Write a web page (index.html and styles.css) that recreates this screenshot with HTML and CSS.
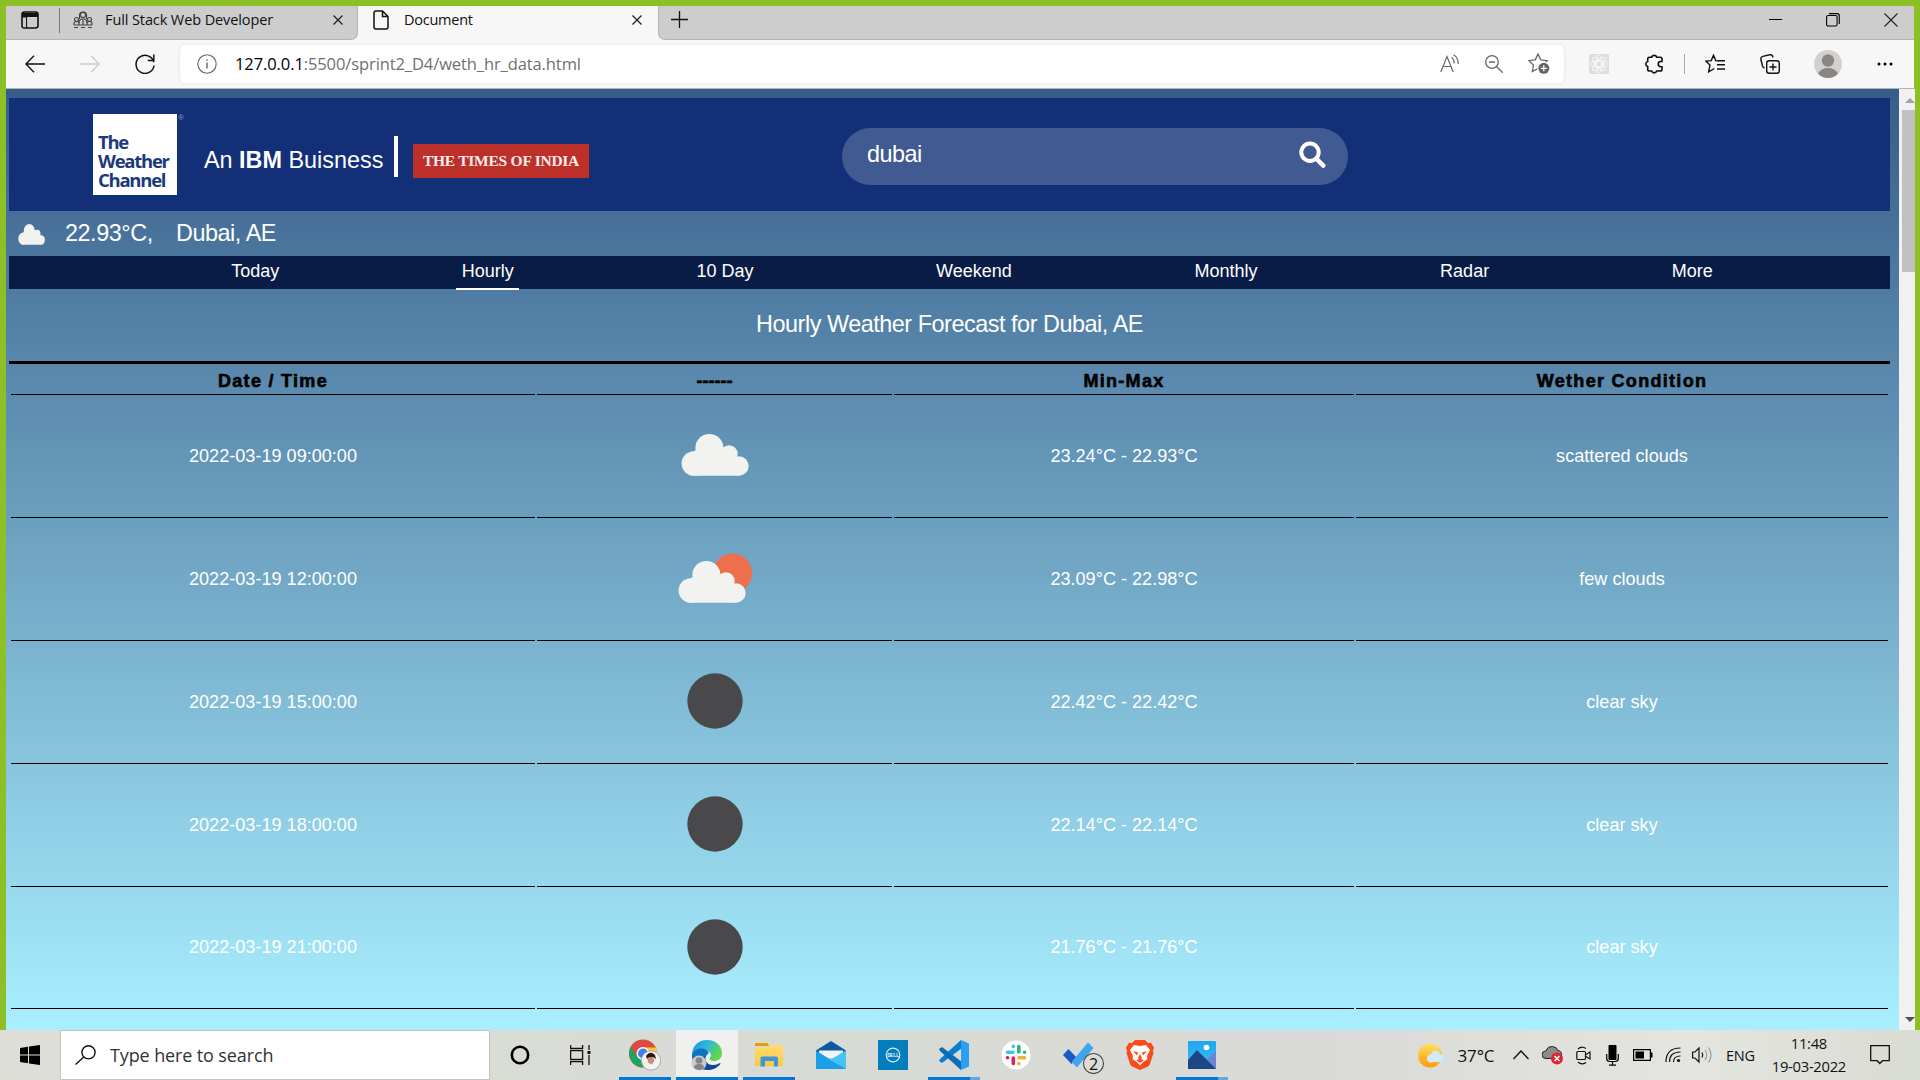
FILE: index.html
```html
<!DOCTYPE html>
<html lang="en">
<head>
<meta charset="utf-8">
<title>Document</title>
<link rel="stylesheet" href="styles.css">
</head>
<body>
<svg width="0" height="0" class="defs">
  <defs>
    <g id="cloud">
      <circle cx="28.9" cy="57.5" r="12.3"/><circle cx="44.4" cy="42" r="14"/><circle cx="64" cy="48" r="8.7"/><circle cx="74" cy="60" r="9.7"/>
      <path d="M29 45l16-8 20 6 9 10v16.7H29z"/>
    </g>
    <linearGradient id="edgeTop" x1="0" y1="0" x2="1" y2=".4"><stop offset="0" stop-color="#1b8fdc"/><stop offset=".5" stop-color="#2cb6dd"/><stop offset="1" stop-color="#62d84c"/></linearGradient>
    <linearGradient id="sky" x1="0" y1="0" x2="0" y2="1"><stop offset="0" stop-color="#1fa6ee"/><stop offset="1" stop-color="#3cc1f5"/></linearGradient>
    <linearGradient id="sunny" x1="0" y1="0" x2="0" y2="1"><stop offset="0" stop-color="#ffdf60"/><stop offset="1" stop-color="#ff9a0c"/></linearGradient>
    <linearGradient id="folder" x1="0" y1="0" x2="0" y2="1"><stop offset="0" stop-color="#ffdc72"/><stop offset="1" stop-color="#fbc83c"/></linearGradient>
  </defs>
</svg>
<div class="window">
  <div class="tabs">
    <div class="tab-menu">
      <svg width="18" height="18" viewBox="0 0 18 18"><rect x="1" y="1" width="16" height="16" rx="2.5" fill="none" stroke="#111" stroke-width="1.6"/><path d="M1 2h16v4H1zM1 5h4.5v12" fill="#111"/><rect x="2" y="6.5" width="3" height="9.6" fill="#cdcdcd"/><path d="M5.6 6v11" stroke="#111"/></svg>
    </div>
    <div class="tab">
      <svg class="favicon" width="20" height="18" viewBox="0 0 20 18" fill="none" stroke="#444" stroke-width="1.2"><circle cx="10" cy="4" r="2.7"/><path d="M6.5 8V4.5Q6.5 1 10 1t3.5 3.500V8M6 12q0-4 4-4t4 4"/><circle cx="3.500" cy="8.500" r="2"/><circle cx="16.500" cy="8.500" r="2"/><path d="M1 14v-1.500q0-2 2.500-2t2.500 2V14M14 14v-1.500q0-2 2.500-2t2.500 2V14M1 16.500h4M8 16.500h4M15 16.500h4M10 9v5M1 14h18"/></svg>
      <span class="tab-title t1">Full Stack Web Developer</span>
      <svg class="close" width="10" height="10" viewBox="0 0 10 10"><path d="M.5.5l9 9M9.500.5l-9 9" stroke="#222" stroke-width="1.300"/></svg>
    </div>
    <div class="tab active">
      <svg class="favicon" width="16" height="20" viewBox="0 0 16 20" fill="none" stroke="#111" stroke-width="1.500"><path d="M9.500 1H3Q1 1 1 3v14q0 2 2 2h10q2 0 2-2V6.500zM9.500 1v5.500H15"/></svg>
      <span class="tab-title t2">Document</span>
      <svg class="close" width="10" height="10" viewBox="0 0 10 10"><path d="M.5.5l9 9M9.500.5l-9 9" stroke="#222" stroke-width="1.300"/></svg>
    </div>
    <div class="rest">
      <svg width="17" height="17" viewBox="0 0 17 17"><path d="M8.500 0v17M0 8.500h17" stroke="#111" stroke-width="1.300"/></svg>
      <div class="controls">
        <svg width="13" height="14" viewBox="0 0 13 14"><path d="M0 6.500h13" stroke="#000"/></svg>
        <svg width="14" height="14" viewBox="0 0 14 14" fill="none" stroke="#000" stroke-width="1.100"><rect x=".6" y="2.500" width="10.500" height="10.500" rx="1.500"/><path d="M3 .6h8q2.300 0 2.300 2.300V11"/></svg>
        <svg width="14" height="14" viewBox="0 0 14 14"><path d="M.5.5l13 13M13.500.5l-13 13" stroke="#222" stroke-width="1.100"/></svg>
      </div>
    </div>
  </div>
  <div class="toolbar">
    <svg width="20" height="18" viewBox="0 0 20 18" fill="none" stroke="#111" stroke-width="1.400"><path d="M20 9H1M9 .7L.9 9l8.100 8.300"/></svg>
    <svg width="20" height="18" viewBox="0 0 20 18" fill="none" stroke="#ccc" stroke-width="1.400"><path d="M0 9h19M11 .7L19.100 9 11 17.300"/></svg>
    <svg width="20" height="20" viewBox="0 0 20 20" fill="none" stroke="#111" stroke-width="1.500"><path d="M18.800 8.200A9 9 0 1 0 19 11.500M18.800.500v6h-6" /></svg>
    <div class="address">
      <svg width="20" height="20" viewBox="0 0 20 20" fill="none" stroke="#666" stroke-width="1.100"><circle cx="10" cy="10" r="9.200"/><path d="M10 8.500v6M10 5.200v1.600" stroke-width="1.400"/></svg>
      <span class="url"><b>127.0.0.1</b>:5500/sprint2_D4/weth_hr_data.html</span>
      <div class="address-icons">
        <svg width="20" height="19" viewBox="0 0 20 19" fill="none" stroke="#666" stroke-width="1.200"><path d="M.8 18L7 2.500 13.200 18M3 12.500h8M11.500 3.500q3 2 2.700 6M13.500.7q5 2.800 4.700 9.300"/></svg>
        <svg width="18" height="18" viewBox="0 0 18 18" fill="none" stroke="#666" stroke-width="1.300"><circle cx="7" cy="7" r="6.300"/><path d="M4 7h6M11.700 11.700l6 6"/></svg>
        <svg width="22" height="21" viewBox="0 0 22 21"><path d="M10 1l2.800 5.900 6.400.8-4.700 4.400 1.200 6.400L10 15.400l-5.700 3.100 1.200-6.400L.8 7.700l6.400-.8z" fill="none" stroke="#666" stroke-width="1.300"/><circle cx="15.800" cy="15.300" r="6.500" fill="#fff"/><circle cx="15.800" cy="15.300" r="5.500" fill="#666"/><path d="M15.800 12.300v6M12.800 15.300h6" stroke="#fff" stroke-width="1.300"/></svg>
      </div>
    </div>
    <svg width="20" height="20" viewBox="0 0 20 20"><rect width="20" height="20" rx="1" fill="#dedede"/><g fill="none" stroke="#f6f6f6"><circle cx="10" cy="10" r="2.500"/><ellipse cx="10" cy="10" rx="8.500" ry="3.500"/><ellipse cx="10" cy="10" rx="8.500" ry="3.500" transform="rotate(45 10 10)"/><ellipse cx="10" cy="10" rx="8.500" ry="3.500" transform="rotate(90 10 10)"/><ellipse cx="10" cy="10" rx="8.500" ry="3.500" transform="rotate(135 10 10)"/></g></svg>
    <svg width="20" height="20" viewBox="0 0 20 20" fill="none" stroke="#111" stroke-width="1.600"><path d="M5.500 3.300h2.200a2.600 2.600 0 0 1 5 0h3.500q1.800 0 1.800 1.800v2.400h-1.200a2.600 2.600 0 0 0 0 5.200H18v2.500q0 1.800-1.800 1.800h-3.500a2.600 2.600 0 0 1-5 0H5.500q-1.800 0-1.800-1.800v-2.600a2.600 2.600 0 0 1 0-5V5.100q0-1.800 1.800-1.800z"/></svg>
    <i class="divider"></i>
    <svg width="20" height="20" viewBox="0 0 20 20" fill="none" stroke="#111" stroke-width="1.400"><path d="M14 7l-3.200-.4L8.500 1.200 6.200 6.600.8 7.100 4.900 11l-1.200 6.800 5.600-3.300M13 6.800h7M12 10.800h8M12 15h8"/></svg>
    <svg width="20" height="20" viewBox="0 0 20 20" fill="none" stroke="#111" stroke-width="1.400"><rect x="6.700" y="6.700" width="12.600" height="12.600" rx="2.500"/><path d="M13 9.500v7M9.500 13h7M4.500 14Q3 13.500 2.500 12L.9 5.500Q.5 3 2.800 2.400l7-1.600q2.500-.3 3 1.700l.3 1"/></svg>
    <svg width="28" height="28" viewBox="0 0 28 28"><circle cx="14" cy="14" r="14" fill="#d3d1ce"/><circle cx="14" cy="10.500" r="6.200" fill="#8b8683"/><path d="M4 23.500Q7 18 14 18t10 5.500Q20 28 14 28T4 23.500z" fill="#8b8683"/></svg>
    <svg class="dots" width="16" height="4" viewBox="0 0 16 4"><circle cx="2" cy="2" r="1.500"/><circle cx="8" cy="2" r="1.500"/><circle cx="14" cy="2" r="1.500"/></svg>
  </div>
  <div class="viewport">
    <main class="page">
      <header class="site-header">
        <div class="twc">The<br>Weather<br>Channel</div><span class="reg">®</span>
        <span class="ibm">An <b>IBM</b> Buisness</span>
        <i class="bar"></i>
        <span class="toi">THE TIMES OF INDIA</span>
        <div class="search"><span>dubai</span>
          <svg width="27" height="27" viewBox="0 0 27 27" fill="none" stroke="#fff"><circle cx="11" cy="11.200" r="8.700" stroke-width="4"/><path d="M17.500 17.800l6.800 6.800" stroke-width="4.500" stroke-linecap="round"/></svg>
        </div>
      </header>
      <div class="current">
        <svg width="27" height="21" viewBox="16 28 68 42" preserveAspectRatio="none" fill="#f2f2f0"><use href="#cloud"/></svg>
        <span class="temp">22.93°C,</span><span class="city">Dubai, AE</span>
      </div>
      <nav class="nav"><span>Today</span><span class="on">Hourly</span><span>10 Day</span><span>Weekend</span><span>Monthly</span><span>Radar</span><span>More</span></nav>
      <h1>Hourly Weather Forecast for Dubai, AE</h1>
      <table>
        <colgroup><col class="c1"><col class="c2"><col class="c3"><col class="c4"></colgroup>
        <thead><tr><th>Date / Time</th><th class="dash">------</th><th>Min-Max</th><th>Wether Condition</th></tr></thead>
        <tbody>
          <tr><td>2022-03-19 09:00:00</td><td><svg width="100" height="100" fill="#f2f2f0"><use href="#cloud"/></svg></td><td>23.24°C - 22.93°C</td><td>scattered clouds</td></tr>
          <tr><td>2022-03-19 12:00:00</td><td><svg width="100" height="100" fill="#f2f2f0"><circle cx="67.500" cy="44.300" r="19.700" fill="#ee6f4d"/><use href="#cloud" x="-3" y="4"/></svg></td><td>23.09°C - 22.98°C</td><td>few clouds</td></tr>
          <tr><td>2022-03-19 15:00:00</td><td><svg width="100" height="100"><circle cx="50" cy="49" r="27.700" fill="#49494b"/></svg></td><td>22.42°C - 22.42°C</td><td>clear sky</td></tr>
          <tr><td>2022-03-19 18:00:00</td><td><svg width="100" height="100"><circle cx="50" cy="49" r="27.700" fill="#49494b"/></svg></td><td>22.14°C - 22.14°C</td><td>clear sky</td></tr>
          <tr class="last"><td>2022-03-19 21:00:00</td><td><svg width="100" height="100"><circle cx="50" cy="49" r="27.700" fill="#49494b"/></svg></td><td>21.76°C - 21.76°C</td><td>clear sky</td></tr>
        </tbody>
      </table>
    </main>
    <div class="scroll">
      <svg width="10" height="5" viewBox="0 0 10 5"><path d="M0 5l5-5 5 5z" fill="#a3a3a3"/></svg>
      <i class="thumb"></i>
      <svg class="down" width="10" height="5" viewBox="0 0 10 5"><path d="M0 0l5 5 5-5z" fill="#505050"/></svg>
    </div>
  </div>
</div>
<div class="taskbar">
  <div class="slot start"><svg width="20" height="20" viewBox="0 0 20 20"><path d="M0 3l8-1.200v7.700H0zM9 1.600L20 0v9.500H9zM0 10.500h8v7.700L0 17zM9 10.500h11V20L9 18.400z"/></svg></div>
  <div class="find"><svg width="21" height="20" viewBox="0 0 21 20" fill="none" stroke="#111" stroke-width="1.400"><circle cx="13.500" cy="7.300" r="6.600"/><path d="M8.800 12L.6 19.400"/></svg><span>Type here to search</span></div>
  <div class="slot"><svg width="20" height="20" viewBox="0 0 20 20"><circle cx="10" cy="10" r="8.200" fill="none" stroke="#000" stroke-width="2.600"/></svg></div>
  <div class="slot"><svg width="21" height="20" viewBox="0 0 21 20" fill="none" stroke="#111" stroke-width="1.300"><path d="M.6 0v3.500h12V0M.6 20v-3.500h12V20M.6 5.700h12v8.600H.6zM19 0v5M19 10v10"/><path d="M17.500 6h3v3h-3z" fill="#111" stroke="none"/></svg></div>
  <div class="apps">
    <div class="app run"><svg width="32" height="32" viewBox="0 0 32 32"><circle cx="14" cy="14.500" r="14" fill="#db4b3f"/><path d="M2 7.500A14 14 0 0 0 14 28.500l6-10.500-12 0z" fill="#1da462"/><path d="M28 14.500A14 14 0 0 1 14 28.500L20 18 15 8.500h11.800q1.200 3 1.200 6z" fill="#fdc93c"/><circle cx="14" cy="14.500" r="6.500" fill="#fff"/><circle cx="14" cy="14.500" r="5" fill="#3f7fee"/><circle cx="22" cy="21.500" r="9.700" fill="#f4f1ee" stroke="#999" stroke-width=".8"/><path d="M17 17q4-6 9-1l1 4-3-2-6 2z" fill="#241a19"/><path d="M18.500 18.500l6-.5 1 4-3 3.500-3.500-2z" fill="#c98d78"/></svg></div>
    <div class="app run current-app"><svg width="32" height="32" viewBox="0 0 32 32"><path d="M1 15C2 5 9 1 16 1c9 0 15 6 15 13 0 6-4 8-8 8-4 0-5-2-3.500-4 1.500-3-1-6-5-6-6-1-10 0-13.500 3z" fill="url(#edgeTop)"/><path d="M1 15c2-4 6-6 10-5.500 4 .5 7 3 6.500 5-4 2-4 8 0 11 2 2 6 2 9.500 0-3 4-7 5.500-11 5.500C8 31 0 25 1 15z" fill="#1172c4"/><path d="M14.500 16.500c-2 5 2 10 8 9.500 3 0 5-1.500 6.500-2 1 0 .5 1-1 2.500-3 3-7 4.500-12 4.500-7-2-7-10-1.500-14.500z" fill="#0d4a94"/><circle cx="8" cy="24" r="7.500" fill="#c9c9c9"/><circle cx="8" cy="21.500" r="3.300" fill="#858585"/><path d="M3 29q0-4 5-4t5 4q-4 4-10 0z" fill="#858585"/></svg></div>
    <div class="app run"><svg width="28" height="26" viewBox="0 0 28 26"><path d="M0 2q0-1 1-1h11q1 0 1 1l1 2H0z" fill="#e2a000"/><path d="M0 6l14-1V3h14v20q0 1-1 1H1q-1 0-1-1z" fill="url(#folder)"/><path d="M5.500 24.500V16q0-1.500 1.500-1.500h14q2 0 2 1.500v8.500h-4V19h-9v5.500z" fill="#4094de"/></svg></div>
    <div class="app"><svg width="30" height="29" viewBox="0 0 30 29"><path d="M0 9.500L15 0l15 9.500v8H0z" fill="#0c59a4"/><path d="M3 9.500h24v8H3z" fill="#f4f4f4"/><path d="M0 9.500L15 19 30 9.500V28H0z" fill="#1a9fe8"/><path d="M30 9.500L14 19l16 9z" fill="#45c3f4"/></svg></div>
    <div class="app"><svg width="30" height="30" viewBox="0 0 30 30"><path fill="#037dbb" d="M0 0h30v30H0z"/><circle cx="15" cy="15" r="6.800" fill="none" stroke="#d8edf8" stroke-width="1.200"/><text class="dell" x="15" y="16.900" text-anchor="middle">DELL</text></svg></div>
    <div class="app run many"><svg width="30" height="30" viewBox="0 0 30 30"><path d="M22 0L1 19l-1 2 3 2L23 8z" fill="#0a7fcf"/><path d="M22 30L1 11 0 9l3-2 20 15z" fill="#0b6db8"/><path d="M22 0l8 3.500v23L22 30z" fill="#2b9ff0"/></svg></div>
    <div class="app"><svg width="30" height="30" viewBox="0 0 30 30"><circle cx="15" cy="15" r="14.500" fill="#fff"/><g stroke-width="3.600" stroke-linecap="round"><path d="M6.500 12.300h5.500M12.300 6.300v.1" stroke="#36c5f0"/><path d="M17.800 6.500V12M23.500 12.300h.1" stroke="#2eb67d"/><path d="M18 17.800h5.500M17.800 23.500v.1" stroke="#ecb22e"/><path d="M12.300 18v5.500M6.500 17.800h.1" stroke="#e01e5a"/></g></svg></div>
    <div class="app"><svg class="todo" width="42" height="34" viewBox="0 0 42 34"><path d="M0 14l5.500-6 8.500 9-5.500 6z" fill="#185abd" transform="translate(0 1)"/><path d="M8.500 22L25 2.500l5.500 5.500L14 27.500z" fill="#41a5ee"/><circle cx="30.500" cy="23.500" r="10" fill="#dcddd9" stroke="#444" stroke-width="1.100"/><text class="badge" x="30.500" y="29.500" text-anchor="middle">2</text></svg></div>
    <div class="app"><svg width="28" height="30" viewBox="0 0 28 30"><path d="M9 0h10l3 3 3-.2 3 5-1 3 .500 2L24 24q-1 2-3 3l-7 3-7-3q-2-1-3-3L.500 12.800l.500-2-1-3 3-5L6 3z" fill="#fb4a1c"/><path d="M8 5l6 1 6-1 4 5-3 6 .5 3-5 3.500-2.500 3-2.500-3-5-3.500.5-3-3-6z" fill="#fff"/><path d="M7 11l5 1.500-1 3zM21 11l-5 1.500 1 3zM14 14l2 4-2 2-2-2zM10 20l4-1 4 1-4 3z" fill="#fb4a1c"/></svg></div>
    <div class="app run many"><svg width="28" height="28" viewBox="0 0 28 28"><rect width="28" height="28" rx="1" fill="url(#sky)"/><path d="M28 10l-11 10v8h11z" fill="#6a83d8"/><path d="M0 19L9 9l19 19H0z" fill="#1d4684"/><circle cx="18.500" cy="6.500" r="2.800" fill="#fff"/></svg></div>
  </div>
  <div class="tray">
    <svg width="26" height="25" viewBox="0 0 26 25"><circle cx="12" cy="12.500" r="12" fill="url(#sunny)"/><g fill="#cfeafb"><circle cx="13" cy="15.500" r="4"/><circle cx="17.500" cy="12" r="4.500"/><circle cx="21.500" cy="15" r="4"/><path d="M13 13h9v6h-9z"/></g></svg>
    <span class="deg">37°C</span>
    <svg width="16" height="10" viewBox="0 0 16 10"><path d="M.5 9L8 1l7.500 8" fill="none" stroke="#111" stroke-width="1.400"/></svg>
    <svg width="21" height="20" viewBox="0 0 21 20"><path d="M4 13.500A3.700 3.700 0 0 1 3.500 6Q6 .8 10.500 1.500T16 5.500q3.800.5 3.500 4.500T16 13.500z" fill="#8b8b8b" stroke="#222"/><circle cx="15" cy="13.500" r="6" fill="#dc2631"/><path d="M12.500 11l5 5M17.500 11l-5 5" stroke="#fff" stroke-width="1.500"/></svg>
    <svg width="15" height="19" viewBox="0 0 15 19" fill="none" stroke="#111" stroke-width="1.200"><rect x=".8" y="5.500" width="8.700" height="8" rx="1"/><path d="M10 8.500l4-2.500v7l-4-2.500M2 3Q5.500-.5 10 2.500M2 16q3.500 3.500 8 .5"/></svg>
    <svg width="13" height="21" viewBox="0 0 13 21"><rect x="2.500" y="0" width="8" height="15" rx="1"/><path d="M.7 9v4.500q0 3 3 3h5.600q3 0 3-3V9M6.500 17v3M3 20.200h7" fill="none" stroke="#000" stroke-width="1.200"/></svg>
    <svg width="20" height="12" viewBox="0 0 20 12"><path d="M.6.6h16.800v10.800H.6z" fill="none" stroke="#000" stroke-width="1.200"/><path d="M2.500 2.500H11v7H2.500zM18 3.500h1.500v5H18z"/></svg>
    <svg width="16" height="16" viewBox="0 0 16 16" fill="none" stroke="#111" stroke-width="1.200"><path d="M1 15Q1 1 15.500 1M4.500 15Q4.500 5 15.500 5M8.500 15Q8.500 9 15.500 9"/><circle cx="13.500" cy="13.500" r="1.600" fill="#111" stroke="none"/></svg>
    <svg width="21" height="18" viewBox="0 0 21 18" fill="none" stroke="#111" stroke-width="1.200"><path d="M.6 6H3l4-4v14l-4-4H.6zM10 6.500q1.500 2.500 0 5"/><path d="M13 4q3.500 5 0 10M16.500 1.500q5 7.500 0 15" stroke="#999"/></svg>
    <span class="lang">ENG</span>
    <div class="clock"><span class="time">11:48</span><span class="date">19-03-2022</span></div>
    <svg class="notes" width="20" height="20" viewBox="0 0 20 20"><path d="M.7.700h18.600v15h-6.800L9.800 18.500 7.200 15.700H.7z" fill="none" stroke="#111" stroke-width="1.300"/></svg>
  </div>
</div>
</body>
</html>
```
FILE: styles.css
```css
* { box-sizing: border-box; }
body { margin: 0; width: 1920px; height: 1080px; overflow: hidden; background: #8dc026; font-family: "Open Sans", "Noto Sans", sans-serif; color: #111; }
svg { display: block; flex: none; }
.defs { position: absolute; }
.window { height: 1030px; padding: 6px 6px 0; display: flex; flex-direction: column; }

/* browser tabs */
.tabs { height: 34px; display: flex; background: #f7f7f7; }
.tab-menu { width: 53px; padding: 5px 0 0 15px; background: #cdcdcd; border-bottom: 1px solid #b5b5b5; }
.tab { width: 299px; display: flex; align-items: flex-start; padding: 5px 14px 0; background: #cdcdcd; border-bottom: 1px solid #b5b5b5; border-right: 1px solid #b5b5b5; border-radius: 0 0 7px 0; }
.tab:not(.active)::before { content: ""; width: 1px; height: 25px; background: #777; margin: -3px 13px 0 -14px; }
.tab.active { width: 300px; background: #f7f7f7; border: 0; padding-left: 15px; padding-right: 16px; border-radius: 0; }
.tab-title { font-size: 14.500px; line-height: 18px; white-space: nowrap; margin-left: 12px; }
.active .tab-title { margin-left: 15px; }
.t1 { letter-spacing: -.1px; }
.t2 { letter-spacing: -.25px; }
.close { margin: 4px 0 0 auto; }
.active .favicon { margin-top: -1px; }
.rest { flex: 1; display: flex; justify-content: space-between; padding: 5px 16px 0 12px; background: #cdcdcd; border-bottom: 1px solid #b5b5b5; border-left: 1px solid #b5b5b5; border-radius: 0 0 0 7px; }
.controls { display: flex; gap: 44px; padding-top: 2px; height: 16px; }

/* toolbar */
.toolbar { height: 49px; padding-left: 9px; background: #f7f7f7; border-bottom: 1px solid #b5b5b5; display: grid; grid-template-columns: 40px 70px 40px 15px 1384px 70px 40px 21px 40px 70px 46px 1fr; align-items: center; justify-items: center; }
.address { grid-column: 5; width: 1384px; height: 38px; margin-top: -1px; background: #fff; border-radius: 5px; box-shadow: 0 0 3px #ddd; display: flex; align-items: center; padding: 0 14px 0 17px; }
.url { margin-left: 18px; font-size: 16.500px; letter-spacing: -.1px; color: #707070; line-height: 24px; white-space: nowrap; }
.url b { font-weight: 400; color: #000; }
.address-icons { margin-left: auto; display: flex; align-items: center; gap: 25px; }
.divider { width: 1px; height: 20px; background: #aaa; }
.dots { margin-left: 4px; }

/* page */
.viewport { flex: 1; display: flex; min-height: 0; }
.page { flex: none; width: 1893px; padding: 9px 9px 0 3px; overflow: hidden; background: linear-gradient(#375c89, #a9efff); font-family: "Liberation Sans", Arial, sans-serif; color: #fff; }
.site-header { height: 113px; background: #122f77; display: flex; align-items: flex-start; padding: 16px 0 0 84px; }
.twc { width: 84px; height: 81px; background: #fff; color: #1b3a7c; font: 700 18.500px/19px "Open Sans", sans-serif; letter-spacing: -1.250px; padding: 18px 0 0 5px; }
.reg { width: 27px; font-size: 8px; line-height: 8px; color: #8d9cc2; padding-left: 1px; }
.ibm { width: 190px; font-size: 23.400px; line-height: 28px; margin-top: 32px; white-space: nowrap; }
.bar { width: 4px; height: 41px; margin-top: 22px; background: #fff; }
.toi { width: 176px; height: 34px; margin: 30px 253px 0 15px; background: #bd3029; font: 700 15.500px/34px "Liberation Serif", serif; text-align: center; white-space: nowrap; letter-spacing: -.25px; color: #fbeceb; }
.search { width: 506px; height: 57px; margin-top: 14px; padding: 13px 22px 0 25px; border-radius: 28.500px; background: #415a91; display: flex; justify-content: space-between; font-size: 23.400px; line-height: 27px; letter-spacing: -.5px; }
.current { height: 45px; display: flex; padding-left: 9px; font-size: 23.400px; line-height: 45px; letter-spacing: -.45px; }
.current svg { margin: 13px 20px 0 0; }
.temp { width: 111px; }
.nav { height: 33px; display: flex; justify-content: space-evenly; padding-left: 45px; background: #091c45; font-size: 18px; line-height: 30px; }
.nav span { padding: 0 5.500px; height: 34px; }
.nav .on { border-bottom: 2px solid #fff; }
h1 { height: 72px; margin: 0; font-size: 23.400px; font-weight: 400; line-height: 70px; letter-spacing: -.46px; text-align: center; }
table { width: 1881px; table-layout: fixed; border-collapse: separate; border-spacing: 2px 0; border-top: 3px solid #000; text-align: center; }
.c1 { width: 524px; } .c2 { width: 355px; } .c3 { width: 460px; } .c4 { width: 532px; }
th { height: 31px; padding: 4px 0 0; border-bottom: 1px solid #000; color: #000; font-size: 18px; line-height: 20px; letter-spacing: 1.300px; -webkit-text-stroke: .6px #000; }
th.dash { letter-spacing: 0; }
td { height: 123px; padding: 0; border-bottom: 1px solid #000; font-size: 18.100px; }
.last td { height: 122px; }
td svg { margin: 0 auto; }
.scroll { flex: 1; background: #f1f1f1; display: flex; flex-direction: column; align-items: center; padding: 9px 0 8px 2px; }
.scroll svg { margin-left: 4px; }
.scroll .thumb { align-self: flex-end; width: 13px; height: 162px; margin-top: 7px; background: #c1c1c1; }
.scroll .down { margin-top: auto; }

/* taskbar */
.taskbar { height: 50px; background: linear-gradient(90deg, #dcded7, #d8dad5 40%, #dadbd8 70%, #e4e5e0 88%, #d9dcd3); display: flex; }
.slot { width: 60px; display: grid; place-items: center; }
.find { width: 430px; background: #fff; border: 1px solid #c4c4c4; display: flex; align-items: center; padding-left: 14px; font-size: 18px; letter-spacing: -.12px; color: #333; }
.find span { margin-left: 14px; }
.apps { display: flex; margin-left: 4px; }
.app { width: 61.900px; display: grid; place-items: center; position: relative; }
.run::after { content: ""; position: absolute; left: 5px; right: 5px; bottom: 0; height: 3px; background: #0078d7; }
.current-app { background: #f0f0ee; }
.current-app::after { left: 0; right: 0; }
.many::after { background: linear-gradient(90deg, #0078d7 80%, #62a8e5 80%); }
.todo { margin: 3px 0 0 12px; }
.dell { font: 700 4.500px "Liberation Sans", sans-serif; fill: #fff; }
.badge { font-size: 16px; fill: #111; }
.tray { margin-left: 182px; display: grid; grid-template-columns: 33px 56px 35px 27px 36px 22px 39px 21px 38px 37px 100px 42px; align-items: center; justify-items: center; }
.deg { font-size: 17px; letter-spacing: -.1px; }
.lang { font-size: 14.500px; letter-spacing: -.3px; }
.clock { display: flex; flex-direction: column; align-items: center; font-size: 14.800px; line-height: 23px; letter-spacing: -.3px; }
```
